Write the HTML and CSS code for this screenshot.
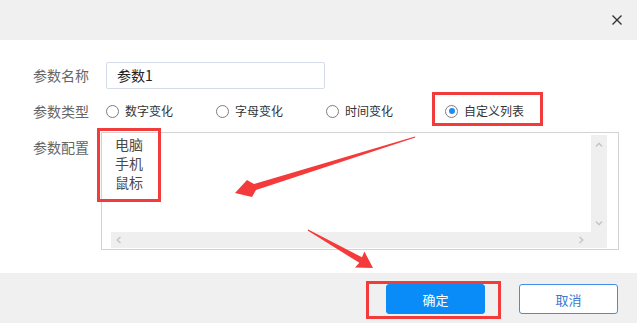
FILE: index.html
```html
<!DOCTYPE html>
<html lang="zh">
<head>
  <meta charset="UTF-8" />
  <meta name="viewport" content="width=device-width, initial-scale=1.0" />
  <title>参数设置</title>
  <link rel="stylesheet" href="styles.css">
</head>
<body>
  <div class="dialog">
    <div class="dialog-header">
      <button class="close-btn" aria-label="关闭">
        <svg width="10" height="10" viewBox="0 0 10 10"><path d="M0.5 0.5 L9.5 9.5 M9.5 0.5 L0.5 9.5" stroke="#333" stroke-width="1.4" fill="none"/></svg>
      </button>
    </div>

    <div class="dialog-body">
      <div class="form-row row-name">
        <span class="form-label">参数名称</span>
        <div class="text-input">参数1</div>
      </div>

      <div class="form-row row-type">
        <span class="form-label">参数类型</span>
        <div class="radio-group">
          <label class="radio"><span class="radio-dot"></span>数字变化</label>
          <label class="radio"><span class="radio-dot"></span>字母变化</label>
          <label class="radio"><span class="radio-dot"></span>时间变化</label>
          <label class="radio radio-last checked"><span class="radio-dot"></span>自定义列表</label>
        </div>
      </div>

      <div class="form-row row-config">
        <span class="form-label">参数配置</span>
        <div class="config-box">
          <div class="scroll-area">
            <div class="scroll-content">电脑<br>手机<br>鼠标</div>
            <div class="vscroll">
              <svg width="8" height="5" viewBox="0 0 8 5"><path d="M1 4.5 L4 1.2 L7 4.5" stroke="#c4c4c4" stroke-width="1.4" fill="none"/></svg>
              <svg width="8" height="5" viewBox="0 0 8 5"><path d="M1 0.5 L4 3.8 L7 0.5" stroke="#c4c4c4" stroke-width="1.4" fill="none"/></svg>
            </div>
            <div class="hscroll">
              <svg width="5" height="8" viewBox="0 0 5 8"><path d="M4.5 1 L1.2 4 L4.5 7" stroke="#c4c4c4" stroke-width="1.4" fill="none"/></svg>
              <svg width="5" height="8" viewBox="0 0 5 8"><path d="M0.5 1 L3.8 4 L0.5 7" stroke="#c4c4c4" stroke-width="1.4" fill="none"/></svg>
            </div>
            <div class="scroll-corner"></div>
          </div>
        </div>
      </div>
    </div>

    <div class="dialog-footer">
      <button class="btn btn-primary">确定</button>
      <button class="btn btn-default">取消</button>
    </div>

    <!-- red annotation marks drawn over the dialog -->
    <svg class="annotations" width="637" height="323" viewBox="0 0 637 323">
      <g fill="none" stroke="#f23b3b" stroke-width="3">
        <rect x="433.5" y="93.5" width="108" height="31"/>
        <rect x="98.5" y="129.5" width="61" height="71"/>
        <rect x="367.5" y="282.5" width="132" height="35"/>
      </g>
      <g fill="#f43a3a">
        <polygon points="235,193 247,180 254,184 415,136.5 415.3,137.6 256,190 252,197"/>
        <polygon points="373,268 364.4,251.5 362,257.3 308.2,229.6 307.6,230.5 359.3,262.8 355,267.6"/>
      </g>
    </svg>
  </div>
</body>
</html>
```

FILE: styles.css
```css
* { margin: 0; padding: 0; box-sizing: border-box; }
body {
  font-family: "Noto Sans CJK SC", "Noto Sans", sans-serif;
  background: #fff;
  color: #333;
  overflow: hidden;
}
.dialog {
  position: relative;
  width: 637px;
  height: 323px;
  display: flex;
  flex-direction: column;
  background: #fff;
}
.dialog-header {
  height: 40px;
  background: #f0f0f0;
  display: flex;
  align-items: center;
  justify-content: flex-end;
  padding-right: 15px;
}
.close-btn {
  background: none;
  border: none;
  width: 10px;
  height: 10px;
  display: flex;
  cursor: pointer;
}
.dialog-body {
  flex: 1;
  padding: 22px 0 0 33px;
}
.form-row {
  display: flex;
  align-items: flex-start;
}
.form-label {
  width: 73px;
  font-size: 14px;
  line-height: 27px;
  color: #666;
  white-space: nowrap;
}
.text-input {
  width: 219px;
  height: 27px;
  border: 1px solid #d6dbe9;
  border-radius: 2px;
  padding-left: 10px;
  font-size: 14px;
  line-height: 25px;
  color: #222;
}
.row-type {
  margin-top: 12px;
}
.row-type .form-label {
  line-height: 20px;
}
.radio-group {
  display: flex;
  gap: 43px;
}
.radio {
  display: flex;
  align-items: center;
  gap: 6px;
  font-size: 12px;
  line-height: 20px;
  color: #333;
  cursor: pointer;
}
.radio-last {
  margin-left: 9px;
}
.radio-dot {
  width: 13px;
  height: 13px;
  border: 1px solid #7d7d7d;
  border-radius: 50%;
  display: flex;
  align-items: center;
  justify-content: center;
  background: #fff;
}
.radio.checked .radio-dot::after {
  content: "";
  width: 6px;
  height: 6px;
  border-radius: 50%;
  background: #1b8cf5;
}
.row-config {
  margin-top: 11px;
}
.row-config .form-label {
  width: 68px;
  line-height: 20px;
  padding-top: 5px;
}
.config-box {
  width: 518px;
  height: 118px;
  border: 1px solid #d3d3d3;
  padding: 2px 11px 1px 9px;
}
.scroll-area {
  height: 100%;
  display: grid;
  grid-template-columns: 1fr 16px;
  grid-template-rows: 1fr 16px;
}
.scroll-content {
  padding: 0 0 0 4px;
  font-size: 14px;
  line-height: 19px;
  color: #4a4a4a;
}
.vscroll {
  background: #efefef;
  display: flex;
  flex-direction: column;
  justify-content: space-between;
  align-items: center;
  padding: 7px 0 6px;
}
.hscroll {
  background: #efefef;
  display: flex;
  justify-content: space-between;
  align-items: center;
  padding: 0 7px 0 5px;
}
.scroll-corner {
  background: #efefef;
}
.dialog-footer {
  height: 50px;
  background: #f0f0f0;
  display: flex;
  justify-content: flex-end;
  align-items: flex-start;
  gap: 34px;
  padding: 11px 19px 0 0;
}
.btn {
  width: 99px;
  height: 30px;
  border-radius: 3px;
  font-family: inherit;
  font-size: 13px;
  cursor: pointer;
}
.btn-primary {
  background: #098cf7;
  border: 1px solid #098cf7;
  color: #fff;
}
.btn-default {
  background: #fff;
  border: 1px solid #3f8fe8;
  color: #3a78cf;
}
.annotations {
  position: absolute;
  top: 0;
  left: 0;
  pointer-events: none;
}
```
